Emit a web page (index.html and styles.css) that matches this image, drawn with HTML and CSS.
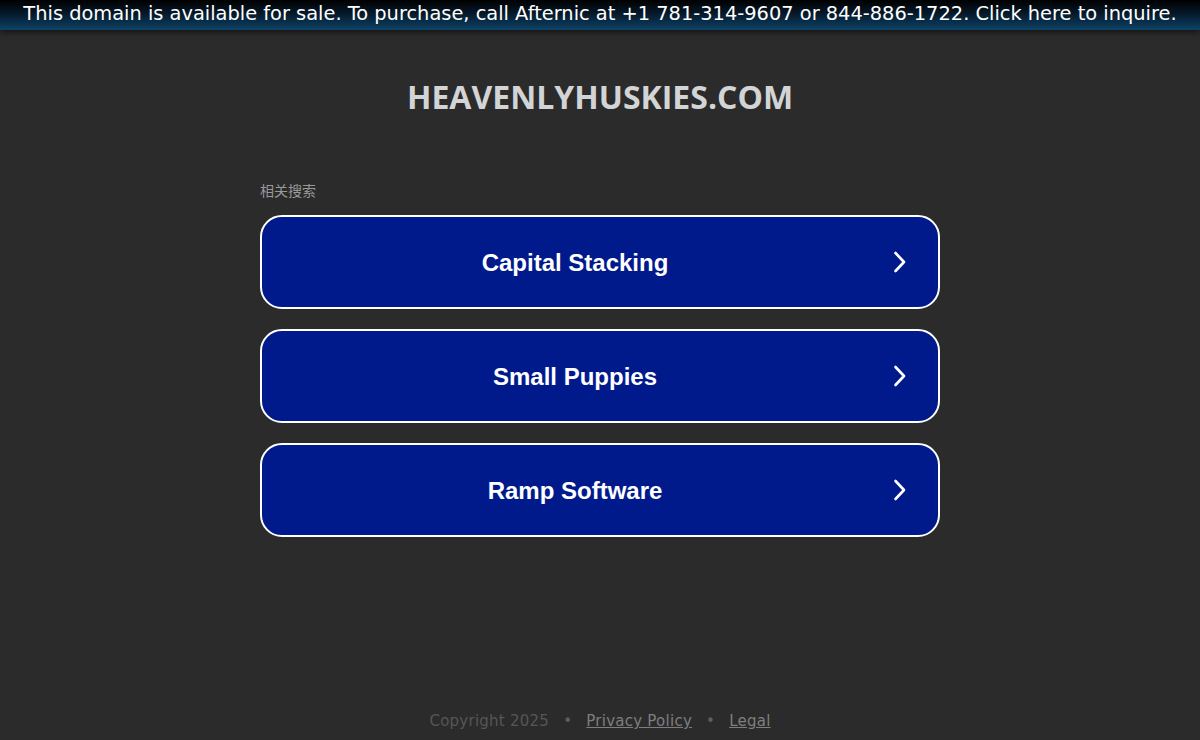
FILE: index.html
```html
<!DOCTYPE html>
<html lang="en">
<head>
<meta charset="utf-8">
<title>heavenlyhuskies.com</title>
<link rel="stylesheet" href="styles.css">
</head>
<body>
<div class="page">
  <a class="sale-bar" href="#">This domain is available for sale. To purchase, call Afternic at +1 781-314-9607 or 844-886-1722. Click here to inquire.</a>
  <header class="site-header">
    <h1 class="domain">HEAVENLYHUSKIES.COM</h1>
  </header>
  <main class="searches">
    <div class="searches-label">相关搜索</div>
    <a class="search-btn" href="#">
      <span class="search-text">Capital Stacking</span>
      <svg class="chev" viewBox="0 0 20 24" width="20" height="24"><path d="M7.5 3 L16 12 L7.5 21" fill="none" stroke="#fff" stroke-width="2.6" stroke-linecap="round" stroke-linejoin="round"/></svg>
    </a>
    <a class="search-btn" href="#">
      <span class="search-text">Small Puppies</span>
      <svg class="chev" viewBox="0 0 20 24" width="20" height="24"><path d="M7.5 3 L16 12 L7.5 21" fill="none" stroke="#fff" stroke-width="2.6" stroke-linecap="round" stroke-linejoin="round"/></svg>
    </a>
    <a class="search-btn" href="#">
      <span class="search-text">Ramp Software</span>
      <svg class="chev" viewBox="0 0 20 24" width="20" height="24"><path d="M7.5 3 L16 12 L7.5 21" fill="none" stroke="#fff" stroke-width="2.6" stroke-linecap="round" stroke-linejoin="round"/></svg>
    </a>
  </main>
  <footer class="footer">
    <span>Copyright 2025</span>
    <span class="dot">•</span>
    <a href="#">Privacy Policy</a>
    <span class="dot">•</span>
    <a href="#">Legal</a>
  </footer>
</div>
</body>
</html>
```
FILE: styles.css
```css
html, body {
  margin: 0;
  padding: 0;
  background: #2b2b2b;
  height: 100%;
}
.page {
  min-height: 740px;
  display: flex;
  flex-direction: column;
  align-items: center;
}
.sale-bar {
  align-self: stretch;
  height: 30px;
  display: flex;
  align-items: center;
  justify-content: center;
  background: linear-gradient(to bottom, #000 0%, #06192a 45%, #0d4367 100%);
  box-shadow: 0 2px 6px rgba(0,0,0,0.6);
  color: #fff;
  font-family: "DejaVu Sans", Verdana, sans-serif;
  font-size: 19.4px;
  line-height: 28px;
  padding-bottom: 2px;
  box-sizing: border-box;
  text-decoration: none;
  white-space: nowrap;
}
.site-header {
  margin-top: 45px;
}
.domain {
  margin: 0;
  font-family: "Open Sans", "DejaVu Sans", sans-serif;
  font-weight: 700;
  font-size: 32px;
  line-height: 44px;
  color: #d2d4d6;
}
.searches {
  margin-top: 62px;
  width: 680px;
  display: flex;
  flex-direction: column;
  gap: 20px;
}
.searches-label {
  font-family: "Noto Sans CJK SC", "Noto Sans", sans-serif;
  font-size: 14px;
  line-height: 18px;
  color: #999;
  margin-bottom: -4px;
}
.search-btn {
  height: 90px;
  border: 2px solid #fff;
  border-radius: 22px;
  background: #001a8c;
  display: flex;
  align-items: center;
  padding-right: 30px;
  text-decoration: none;
}
.search-text {
  flex: 1;
  text-align: center;
  padding-top: 2px;
  font-family: "Liberation Sans", Arial, sans-serif;
  font-weight: 700;
  font-size: 24px;
  color: #fff;
}
.chev {
  display: block;
}
.footer {
  margin-top: auto;
  padding-bottom: 7px;
  display: flex;
  gap: 14px;
  font-family: "DejaVu Sans", sans-serif;
  font-size: 15px;
  letter-spacing: 0.25px;
  line-height: 24px;
  color: #565656;
}
.footer a {
  color: #7e7e7e;
  text-decoration: underline;
}
.dot {
  color: #5e5e5e;
}
```
